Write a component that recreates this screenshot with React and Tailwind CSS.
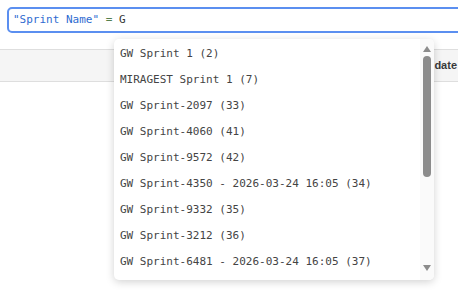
import React from 'react';

const items = [
  'GW Sprint 1 (2)',
  'MIRAGEST Sprint 1 (7)',
  'GW Sprint-2097 (33)',
  'GW Sprint-4060 (41)',
  'GW Sprint-9572 (42)',
  'GW Sprint-4350 - 2026-03-24 16:05 (34)',
  'GW Sprint-9332 (35)',
  'GW Sprint-3212 (36)',
  'GW Sprint-6481 - 2026-03-24 16:05 (37)',
];

function Scrollbar() {
  return (
    <div className="flex w-[14px] flex-col items-center bg-[#fafafa] pt-[7px]">
      <div className="h-0 w-0 border-x-[4.5px] border-b-[6px] border-x-transparent border-b-[#8c8c8c]" />
      <div className="mt-[4px] h-[121px] w-[8px] rounded-[4px] bg-[#8c8c8c]" />
      <div className="flex-1" />
      <div className="mb-[9px] h-0 w-0 border-x-[4.5px] border-t-[6px] border-x-transparent border-t-[#8c8c8c]" />
    </div>
  );
}

export default function App() {
  return (
    <div className="relative h-[290px] w-[458px] overflow-hidden bg-white font-['Liberation_Sans',sans-serif]">
      <div className="px-[7px] pt-[7px]">
        <div className="flex h-[26px] w-[470px] items-center rounded-[5px] border-2 border-[#5b8ff0] pl-[4px] font-['DejaVu_Sans_Mono',monospace] text-[11px]">
          <span className="text-[#2f6bd1]">"Sprint Name"</span>
          <span className="whitespace-pre text-[#55804f]"> = </span>
          <span className="text-[#333]">G</span>
        </div>
      </div>
      <div className="mt-[16px] flex h-[33px] items-center justify-end border-y border-[#dedede] bg-[#f5f5f5] pr-[1px]">
        <span className="text-[11px] font-semibold text-[#3a3a3a]">date</span>
      </div>

      <div className="absolute left-[114px] top-[39px] flex h-[241px] w-[320px] overflow-hidden rounded-[5px] bg-white shadow-[0_2px_8px_rgba(0,0,0,0.18)]">
        <ul className="flex-1 pt-[2px] font-['DejaVu_Sans_Mono',monospace] text-[11px] text-[#444]">
          {items.map((it) => (
            <li key={it} className="flex h-[26px] items-center whitespace-pre pl-[6px]">
              {it}
            </li>
          ))}
        </ul>
        <Scrollbar />
      </div>
    </div>
  );
}
